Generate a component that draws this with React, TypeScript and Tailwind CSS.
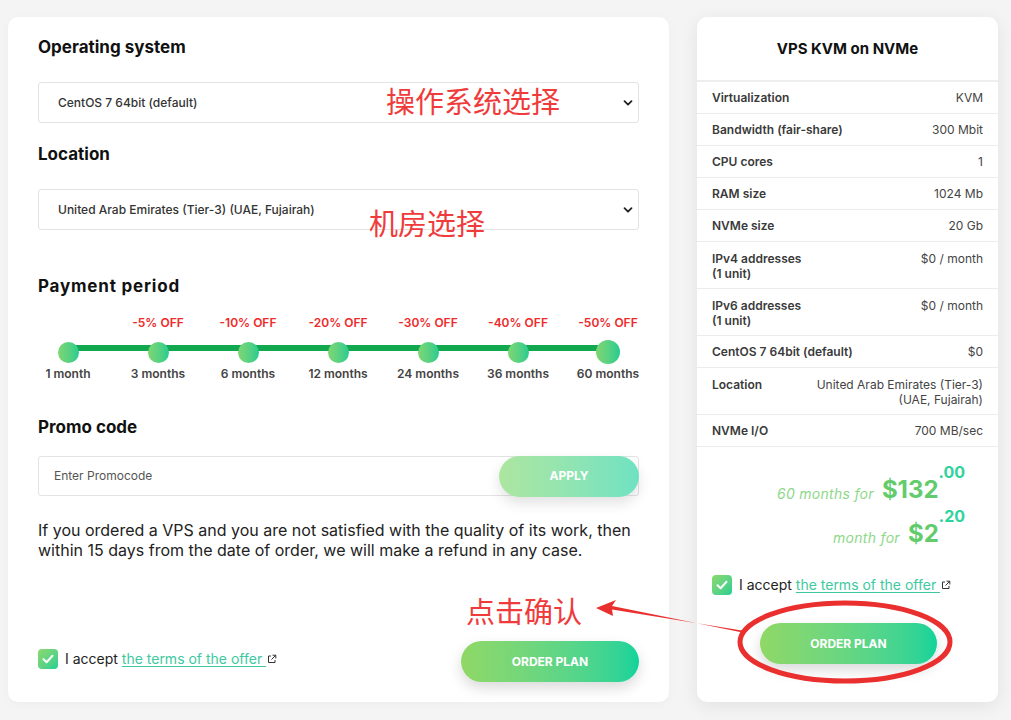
import React from "react";

const months = [
  { label: "1 month", off: "" },
  { label: "3 months", off: "-5% OFF" },
  { label: "6 months", off: "-10% OFF" },
  { label: "12 months", off: "-20% OFF" },
  { label: "24 months", off: "-30% OFF" },
  { label: "36 months", off: "-40% OFF" },
  { label: "60 months", off: "-50% OFF" },
];

const specs: [string, string][] = [
  ["Virtualization", "KVM"],
  ["Bandwidth (fair-share)", "300 Mbit"],
  ["CPU cores", "1"],
  ["RAM size", "1024 Mb"],
  ["NVMe size", "20 Gb"],
  ["IPv4 addresses\n(1 unit)", "$0 / month"],
  ["IPv6 addresses\n(1 unit)", "$0 / month"],
  ["CentOS 7 64bit (default)", "$0"],
  ["Location", "United Arab Emirates (Tier-3)\n(UAE, Fujairah)"],
  ["NVMe I/O", "700 MB/sec"],
];

function Chevron() {
  return (
    <svg width="10" height="10" viewBox="0 0 10 10" className="shrink-0">
      <path d="M1.5 3.2 L5 6.7 L8.5 3.2" fill="none" stroke="#222" strokeWidth="1.8" strokeLinecap="round" strokeLinejoin="round" />
    </svg>
  );
}

function Check() {
  return (
    <div className="w-[20px] h-[20px] rounded-[4px] bg-gradient-to-br from-[#8ad86c] to-[#18cf92] flex items-center justify-center shrink-0">
      <svg width="14" height="14" viewBox="0 0 14 14">
        <path d="M2.5 7.3 L5.6 10.2 L11.5 3.8" fill="none" stroke="white" strokeWidth="2" strokeLinecap="round" strokeLinejoin="round" />
      </svg>
    </div>
  );
}

function Ext() {
  return (
    <svg width="10" height="10" viewBox="0 0 10 10" className="inline-block ml-[1px] align-baseline">
      <path d="M4 2 H1.5 V8.5 H8 V6" fill="none" stroke="#333" strokeWidth="1" />
      <path d="M5.5 1.2 H8.8 V4.5 M8.8 1.2 L4.5 5.5" fill="none" stroke="#333" strokeWidth="1" />
    </svg>
  );
}

function Accept() {
  return (
    <div className="flex items-center gap-[7px]">
      <Check />
      <span className="text-[14px] text-[#222]">
        I accept{" "}
        <span className="text-[#3ec9a0] underline underline-offset-2 decoration-[#3ec9a0]">the terms of the offer </span>
        <Ext />
      </span>
    </div>
  );
}

function Select({ text }: { text: string }) {
  return (
    <div className="h-[41px] border border-[#e3e3e3] rounded-[3px] flex items-center justify-between pl-[19px] pr-[5px] text-[12px] text-[#333] font-medium">
      <span>{text}</span>
      <Chevron />
    </div>
  );
}

export default function App() {
  return (
    <div className="relative w-[1011px] h-[720px] bg-[#f4f4f4] overflow-hidden" style={{ fontFamily: "Inter, 'Noto Sans', 'Liberation Sans', sans-serif" }}>
      <div className="flex gap-[28px] pl-[8px] pt-[17px]">
        {/* Left card */}
        <div className="w-[661px] h-[685px] bg-white rounded-[10px] shadow-[0_2px_10px_rgba(0,0,0,0.03)] px-[30px] pt-[18px] pb-[20px] flex flex-col">
          <h2 className="text-[17px] leading-[24px] font-bold text-[#111]">Operating system</h2>
          <div className="mt-[23px]">
            <Select text="CentOS 7 64bit (default)" />
          </div>
          <h2 className="mt-[19px] text-[17px] leading-[24px] font-bold text-[#111]">Location</h2>
          <div className="mt-[23px]">
            <Select text="United Arab Emirates (Tier-3) (UAE, Fujairah)" />
          </div>
          <h2 className="mt-[44px] text-[17px] leading-[24px] font-bold text-[#111] tracking-[0.8px]">Payment period</h2>
          <div className="mt-[17px] -ml-[15px] w-[630px] relative">
            <div className="absolute left-[45px] right-[45px] top-[30px] h-[6px] bg-[#12a850]" />
            <div className="grid grid-cols-7 relative">
              {months.map((m, i) => (
                <div key={m.label} className="flex flex-col items-center">
                  <div className="h-[16px] text-[12px] leading-[16px] font-semibold text-[#ee2a2a]">{m.off}</div>
                  <div className="h-[24px] mt-[9px] flex items-center justify-center">
                    <div
                      className={
                        i === 6
                          ? "w-[24px] h-[24px] rounded-full bg-gradient-to-r from-[#7dd671] to-[#1fcc8f]"
                          : "w-[21px] h-[21px] rounded-full bg-gradient-to-r from-[#7dd671] to-[#1fcc8f]"
                      }
                    />
                  </div>
                  <div className="mt-[2px] text-[12px] leading-[16px] font-semibold text-[#444]">{m.label}</div>
                </div>
              ))}
            </div>
          </div>
          <h2 className="mt-[33px] text-[17px] leading-[24px] font-bold text-[#111]">Promo code</h2>
          <div className="mt-[17px] h-[40px] border border-[#e3e3e3] rounded-[3px] flex items-center justify-between">
            <span className="pl-[15px] text-[12px] text-[#555]">Enter Promocode</span>
            <div className="h-[41px] w-[140px] -mr-[1px] rounded-full bg-gradient-to-r from-[#ade6a0] to-[#6fe2c2] shadow-[0_6px_14px_rgba(0,0,0,0.12)] flex items-center justify-center text-white text-[12px] font-bold">
              APPLY
            </div>
          </div>
          <p className="mt-[24px] text-[16px] leading-[20px] text-[#222]">
            If you ordered a VPS and you are not satisfied with the quality of its work, then within 15 days from the date of order, we will make a refund in any case.
          </p>
          <div className="mt-auto flex items-center justify-between">
            <div className="mb-[6px]">
              <Accept />
            </div>
            <div className="w-[178px] h-[41px] rounded-full bg-gradient-to-r from-[#8fd866] to-[#0fd39a] shadow-[0_6px_14px_rgba(0,0,0,0.15)] flex items-center justify-center text-white text-[12px] font-bold">
              ORDER PLAN
            </div>
          </div>
        </div>

        {/* Right card */}
        <div className="w-[301px] h-[685px] bg-white rounded-[10px] shadow-[0_4px_18px_rgba(0,0,0,0.08)] flex flex-col">
          <div className="h-[65px] border-b-[2px] border-[#eeeeee] flex items-center justify-center pt-[2px]">
            <h3 className="text-[15px] font-bold text-[#111]">VPS KVM on NVMe</h3>
          </div>
          {specs.map(([k, v]) => {
            const multi = k.includes("\n") || v.includes("\n");
            return (
              <div
                key={k}
                className={
                  "border-b border-[#ececec] px-[15px] flex justify-between text-[12px] leading-[15px] " +
                  (multi ? "h-[47px] pt-[9px]" : "h-[32px] items-center")
                }
              >
                <span className="font-semibold text-[#3a3a3a] whitespace-pre-line">{k}</span>
                <span className="text-[#444] text-right whitespace-pre-line">{v}</span>
              </div>
            );
          })}
          <div className="mt-[16px] pr-[33px] flex flex-col items-end">
            <div className="flex items-start">
              <span className="mt-[20px] text-[14px] italic tracking-[0.3px] text-[#8ed88a] mr-[8px]">60 months for</span>
              <span className="text-[24px] leading-[30px] mt-[12px] font-bold text-[#62cc6c]">$132</span>
              <span className="text-[16px] leading-[18px] font-bold text-[#2fd39c]">.00</span>
            </div>
            <div className="flex items-start mt-[2px]">
              <span className="mt-[20px] text-[14px] italic tracking-[0.3px] text-[#8ed88a] mr-[8px]">month for</span>
              <span className="text-[24px] leading-[30px] mt-[12px] font-bold text-[#62cc6c]">$2</span>
              <span className="text-[16px] leading-[18px] font-bold text-[#2fd39c]">.20</span>
            </div>
          </div>
          <div className="mt-[25px] pl-[15px]">
            <Accept />
          </div>
          <div className="mt-[28px] flex justify-center pl-[2px]">
            <div className="w-[177px] h-[41px] rounded-full bg-gradient-to-r from-[#8fd866] to-[#0fd39a] shadow-[0_6px_14px_rgba(0,0,0,0.15)] flex items-center justify-center text-white text-[12px] font-bold">
              ORDER PLAN
            </div>
          </div>
        </div>
      </div>

      {/* Annotations overlay */}
      <div className="absolute left-[386px] top-[80px] text-[29px] leading-[40px] text-[#ef3b3b]" style={{ fontFamily: "'Noto Sans CJK SC', sans-serif" }}>操作系统选择</div>
      <div className="absolute left-[369px] top-[202px] text-[29px] leading-[40px] text-[#ef3b3b]" style={{ fontFamily: "'Noto Sans CJK SC', sans-serif" }}>机房选择</div>
      <div className="absolute left-[466px] top-[590px] text-[29px] leading-[40px] text-[#ef3b3b]" style={{ fontFamily: "'Noto Sans CJK SC', sans-serif" }}>点击确认</div>
      <svg className="absolute left-0 top-0 pointer-events-none" width="1011" height="720">
        <polygon points="745,631 612,609.5 613,616 596,608 616,600 612,606 745,633" fill="#ea2f2f" />
        <ellipse cx="845" cy="642" rx="105" ry="39" fill="none" stroke="#ea2f2f" strokeWidth="5" />
      </svg>
    </div>
  );
}
